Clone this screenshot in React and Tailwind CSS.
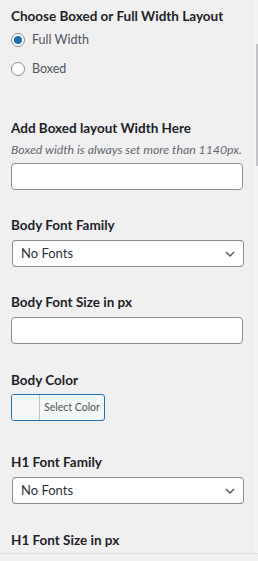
import { useState } from "react"

const font = { fontFamily: 'Lato, "Noto Sans", sans-serif' }

const Title = ({ children, className = "" }) => (
  <h3 className={`h-[18px] text-[13.5px] font-bold leading-[18px] text-[#1d2327] ${className}`}>
    {children}
  </h3>
)

const Radio = ({ label, checked, onChange, className = "" }) => (
  <label className={`flex h-4 cursor-pointer items-center gap-[7px] ${className}`}>
    <span className="flex h-[14px] w-[14px] items-center justify-center rounded-full border border-[#8c8f94] bg-white">
      {checked && <span className="h-[8px] w-[8px] rounded-full bg-[#2271b1]" />}
    </span>
    <input type="radio" className="hidden" checked={checked} onChange={onChange} />
    <span className="text-[12.5px] text-[#50575e]">{label}</span>
  </label>
)

const TextInput = ({ className = "" }) => (
  <input
    type="text"
    className={`block h-[27px] w-[232px] rounded-[4px] border border-[#8c8f94] bg-white px-2 text-[13px] outline-none ${className}`}
  />
)

const Select = ({ className = "" }) => (
  <div
    className={`ml-px flex h-[27px] w-[232px] items-center justify-between rounded-[3px] border border-[#8c8f94] bg-white pl-[8px] pr-[8px] ${className}`}
  >
    <span className="text-[13px] text-[#2c3338]">No Fonts</span>
    <svg width="10" height="6" viewBox="0 0 10 6" fill="none">
      <path d="M1 1l4 4 4-4" stroke="#50575e" strokeWidth="1.4" />
    </svg>
  </div>
)

export default function App() {
  const [layout, setLayout] = useState("full")

  return (
    <div className="relative h-[561px] w-[258px] overflow-hidden bg-[#f0f0f1]" style={font}>
      <div className="h-[553px] overflow-hidden pl-[11px]">
        <Title className="mt-[7px]">Choose Boxed or Full Width Layout</Title>
        <Radio
          className="mt-[7px]"
          label="Full Width"
          checked={layout === "full"}
          onChange={() => setLayout("full")}
        />
        <Radio
          className="mt-[13px]"
          label="Boxed"
          checked={layout === "boxed"}
          onChange={() => setLayout("boxed")}
        />

        <Title className="mt-[42px]">Add Boxed layout Width Here</Title>
        <p className="mt-[5px] h-4 text-[12.3px] italic leading-4 text-[#646970]">
          Boxed width is always set more than 1140px.
        </p>
        <TextInput className="mt-[5px]" />

        <Title className="mt-[26px]">Body Font Family</Title>
        <Select className="mt-[6px]" />

        <Title className="mt-[26px]">Body Font Size in px</Title>
        <TextInput className="mt-[6px]" />

        <Title className="mt-[27px]">Body Color</Title>
        <button className="mt-[5px] flex h-[27px] w-[94px] overflow-hidden rounded-[3px] border border-[#2271b1] bg-[#f6f7f7]">
          <span className="h-full w-[28px] border-r border-[#c3c4c7] bg-[#f6f7f7]" />
          <span className="flex h-full flex-1 items-center justify-center text-[10.5px] text-[#50575e]">
            Select Color
          </span>
        </button>

        <Title className="mt-[32px]">H1 Font Family</Title>
        <Select className="mt-[6px]" />

        <Title className="mt-[27px]">H1 Font Size in px</Title>
        <TextInput className="mt-[6px]" />
      </div>
      <div className="h-[8px] border-t border-[#dcdcde] bg-[#f0f0f1]" />

      <div className="absolute right-0 top-0 h-[553px] w-[4px] bg-[#f3f3f4]">
        <div className="ml-auto mt-[44px] h-[122px] w-[2px] bg-[#c3c4c7]" />
      </div>
    </div>
  )
}
